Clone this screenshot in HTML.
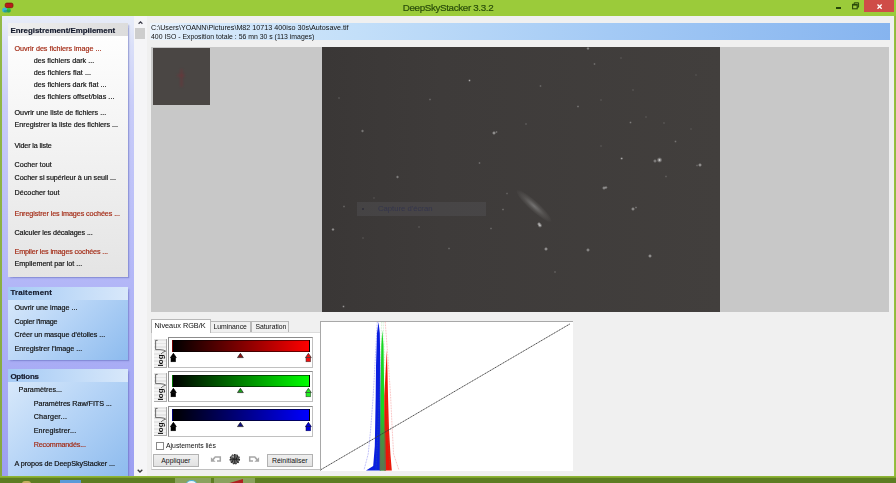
<!DOCTYPE html>
<html><head><meta charset="utf-8">
<style>
html,body{margin:0;padding:0;}
body{width:896px;height:483px;overflow:hidden;position:relative;background:#f0f0f0;font-family:"Liberation Sans",sans-serif;font-size:7.2px;color:#0e0e0e;}
span,.btn,#ttext{will-change:opacity;opacity:0.999}
div,span{position:absolute;box-sizing:border-box;white-space:nowrap;}
svg{position:absolute;overflow:visible;}
#title{left:0;top:0;width:896px;height:15.9px;background:#9bcb3a;}
#ttext{left:0;width:896px;top:1.8px;text-align:center;font-size:9.8px;letter-spacing:-0.35px;color:#2a4d0a;-webkit-text-stroke:0.2px #2a4d0a;}
#lb{left:0;top:16px;width:1.9px;height:461px;background:linear-gradient(180deg,#93ba48,#86a840);}
#rb{left:893.9px;top:16px;width:2.2px;height:461px;background:linear-gradient(90deg,#9cc63c,#8db243);}
#side{left:2px;top:16px;width:132px;height:461px;background:linear-gradient(180deg,#e8edf8 0px,#dadff8 30px,#c8ccf8 90px,#b7bbf8 230px,#9c9ff2 460px);}
.panel{left:6.2px;width:119.8px;}
.t{line-height:10px;height:10px;-webkit-text-stroke:0.18px currentColor;}
.r{color:#a32a14;}
.h{font-weight:bold;font-size:7.9px;color:#141a2c;}
.btn{background:linear-gradient(180deg,#efefef,#e2e2e2);border:0.7px solid #b2b2b2;text-align:center;font-size:6.9px;line-height:12px;color:#111;}
.sl{left:168px;width:145px;height:31px;background:#fff;border:0.8px solid #c0c0c0;border-top-color:#8c8c8c;border-left-color:#8c8c8c;}
.gr{left:171.7px;width:138px;height:12px;}
.log{left:154px;width:13px;height:29px;background:repeating-linear-gradient(180deg,#e6e6e6 0,#e6e6e6 0.7px,#f4f4f4 0.7px,#f4f4f4 1.4px);border-right:0.7px solid #aaa;border-bottom:0.7px solid #aaa;}
</style></head><body>
<div id="title"></div><div id="ttext">DeepSkyStacker 3.3.2</div>
<div id="lb"></div><div id="rb"></div>
<svg style="left:0;top:0" width="16" height="16" viewBox="0 0 16 16"><rect x="5.2" y="3.1" width="7.8" height="4.6" rx="1.6" fill="#b81c1c" stroke="#7a1208" stroke-width="0.7"/><ellipse cx="4.7" cy="10" rx="2.5" ry="2.5" fill="#34b8d8"/><ellipse cx="8.8" cy="10.3" rx="2" ry="2.2" fill="#2cc43c"/><ellipse cx="7" cy="11.3" rx="3.6" ry="1.3" fill="#1f8a6a" opacity="0.6"/></svg><div style="left:864.3px;top:0;width:29.4px;height:11.7px;background:#cf4c48;"></div>
<svg style="left:877.2px;top:3.7px" width="5.2" height="5.2" viewBox="0 0 5.2 5.2"><path d="M0.5 0.5 L4.7 4.7 M4.7 0.5 L0.5 4.7" stroke="#fff" stroke-width="1.3" fill="none"/></svg>
<div style="left:835.6px;top:6.7px;width:5.8px;height:1.9px;background:#27470a;"></div>
<svg style="left:852px;top:2.2px" width="7.2" height="7.4" viewBox="0 0 7.2 7.4"><path d="M2.2 2 V0.8 H6.6 V5.2 H5.2" stroke="#27470a" stroke-width="1" fill="none"/><rect x="0.6" y="2.4" width="4.6" height="4.4" stroke="#27470a" stroke-width="1.1" fill="none"/><path d="M0.6 2.9 H5.2" stroke="#27470a" stroke-width="1.4"/></svg>
<div id="side">
 <div class="panel" id="p1" style="top:7px;height:253.8px;background:linear-gradient(180deg,#ffffff 0,#f6f6f6 35%,#e4e4e4 100%);box-shadow:2.2px 2.2px 1.4px rgba(84,94,176,0.42);">
  <div style="left:0;top:0;width:119.8px;height:13.2px;background:linear-gradient(90deg,#f0f0f0,#dcdcdc);"></div>
 </div>
 <div class="panel" id="p2" style="top:270.8px;height:73px;background:linear-gradient(135deg,#dcebfb 0,#b4d3f6 50%,#8dbbee 100%);box-shadow:2.2px 2.2px 1.4px rgba(84,94,176,0.42);">
  <div style="left:0;top:0;width:119.8px;height:13.2px;background:linear-gradient(90deg,#a6cbf5,#d8e8fa);"></div>
 </div>
 <div class="panel" id="p3" style="top:353px;height:108px;background:linear-gradient(135deg,#dcebfb 0,#b4d3f6 50%,#8dbbee 100%);box-shadow:2.2px 2.2px 1.4px rgba(84,94,176,0.42);">
  <div style="left:0;top:0;width:119.8px;height:13.2px;background:linear-gradient(90deg,#a6cbf5,#d8e8fa);"></div>
 </div>
</div>
<div id="stext" style="left:0;top:0;width:134px;height:477px;overflow:hidden;">
<span class="t h" style="left:10.4px;top:26.4px;letter-spacing:0px">Enregistrement/Empilement</span>
<span class="t h" style="left:10.4px;top:288.4px;letter-spacing:0.17px">Traitement</span>
<span class="t h" style="left:10.4px;top:371.7px;letter-spacing:-0.22px">Options</span>
<span class="t r" style="left:14.5px;top:43.7px;letter-spacing:-0.021px">Ouvrir des fichiers image ...</span>
<span class="t " style="left:33.7px;top:55.8px;letter-spacing:0.009px">des fichiers dark ...</span>
<span class="t " style="left:33.7px;top:67.6px;letter-spacing:0.073px">des fichiers flat ...</span>
<span class="t " style="left:33.7px;top:79.7px;letter-spacing:0.04px">des fichiers dark flat ...</span>
<span class="t " style="left:33.7px;top:91.5px;letter-spacing:0.068px">des fichiers offset/bias ...</span>
<span class="t " style="left:14.5px;top:108.0px;letter-spacing:0.02px">Ouvrir une liste de fichiers ...</span>
<span class="t " style="left:14.5px;top:120.0px;letter-spacing:-0.01px">Enregistrer la liste des fichiers ...</span>
<span class="t " style="left:14.5px;top:140.8px;letter-spacing:-0.133px">Vider la liste</span>
<span class="t " style="left:14.5px;top:159.8px;letter-spacing:0.014px">Cocher tout</span>
<span class="t " style="left:14.5px;top:173.2px;letter-spacing:-0.048px">Cocher si supérieur à un seuil ...</span>
<span class="t " style="left:14.5px;top:187.9px;letter-spacing:0.029px">Décocher tout</span>
<span class="t r" style="left:14.5px;top:209.4px;letter-spacing:-0.084px">Enregistrer les images cochées ...</span>
<span class="t " style="left:14.5px;top:228.2px;letter-spacing:-0.081px">Calculer les décalages ...</span>
<span class="t r" style="left:14.5px;top:246.7px;letter-spacing:-0.137px">Empiler les images cochées ...</span>
<span class="t " style="left:14.5px;top:259.2px;letter-spacing:-0.011px">Empilement par lot ...</span>
<span class="t " style="left:14.5px;top:302.7px;letter-spacing:-0.001px">Ouvrir une image ...</span>
<span class="t " style="left:14.5px;top:316.6px;letter-spacing:-0.201px">Copier l'image</span>
<span class="t " style="left:14.5px;top:330.1px;letter-spacing:-0.035px">Créer un masque d'étoiles ...</span>
<span class="t " style="left:14.5px;top:343.5px;letter-spacing:0.001px">Enregistrer l'image ...</span>
<span class="t " style="left:18.6px;top:385.0px;letter-spacing:0.03px">Paramètres...</span>
<span class="t " style="left:33.7px;top:398.9px;letter-spacing:-0.045px">Paramètres Raw/FITS ...</span>
<span class="t " style="left:33.7px;top:411.9px;letter-spacing:0.182px">Charger...</span>
<span class="t " style="left:33.7px;top:425.8px;letter-spacing:0.135px">Enregistrer...</span>
<span class="t r" style="left:33.7px;top:439.7px;letter-spacing:-0.164px">Recommandés...</span>
<span class="t " style="left:14.5px;top:458.5px;letter-spacing:-0.048px">A propos de DeepSkyStacker ...</span>
</div>
<div id="sb" style="left:134px;top:16px;width:13px;height:461px;background:#f5f5f7;">
 <div style="left:1.2px;top:11.5px;width:9.8px;height:11px;background:#cdcdcd;"></div>
 <svg style="left:3.5px;top:4.9px" width="5" height="3.3" viewBox="0 0 6 4"><path d="M0.7 3.3 L3 1 L5.3 3.3" fill="none" stroke="#3a3a46" stroke-width="1.4"/></svg>
 <svg style="left:3.2px;top:453px" width="6" height="4" viewBox="0 0 6 4"><path d="M0.7 0.7 L3 3 L5.3 0.7" fill="none" stroke="#3a3a3a" stroke-width="1.3"/></svg>
</div>
<div id="info" style="left:150px;top:22.5px;width:739.5px;height:17.5px;background:linear-gradient(90deg,#ecf4fd 0,#d6e9fb 6%,#c3dff9 28%,#a4caf5 62%,#86b4ef 100%);"></div>
<span id="l1" style="left:151.3px;top:23.7px;font-size:7.8px;line-height:8.8px;color:#111;transform-origin:0 0;transform:scaleX(0.921)">C:\Users\YOANN\Pictures\M82 10713 400iso 30s\Autosave.tif</span>
<span id="l2" style="left:151.3px;top:32.5px;font-size:7.8px;line-height:8.8px;color:#111;transform-origin:0 0;transform:scaleX(0.883)">400 ISO - Exposition totale : 56 mn 30 s (113 images)</span>
<div id="gray" style="left:151.1px;top:46.5px;width:738.3px;height:265.2px;background:#c8c8c8;"></div>
<div id="thumb" style="left:153.1px;top:48.1px;width:57.1px;height:57.1px;background:#4a4644;"><div style="left:26.5px;top:21px;width:3.4px;height:18px;background:rgba(140,40,48,.26);filter:blur(1px)"></div><div style="left:23.5px;top:25.5px;width:8.5px;height:3.4px;background:rgba(140,40,48,.22);filter:blur(1px)"></div></div>
<div id="img" style="left:322px;top:47.4px;width:397.7px;height:264.3px;background:linear-gradient(90deg,#3a3736 0,#3e3b3a 30%,#423f3d 100%);overflow:hidden;">
<div style="left:35.2px;top:154.2px;width:128.8px;height:14px;background:rgba(96,96,104,0.28);"></div>
<span style="left:56px;top:156.3px;font-size:7.7px;line-height:10px;color:rgba(40,44,80,0.6);">Capture d'écran</span>
<div style="left:40px;top:160.5px;width:2px;height:2px;background:rgba(30,30,50,.6);border-radius:1px"></div>
<div style="left:188.5px;top:154px;width:46px;height:10px;border-radius:50%;background:radial-gradient(ellipse at center,rgba(150,150,150,.6) 0,rgba(110,108,106,.4) 40%,rgba(62,59,58,0) 75%);transform:rotate(42deg);"></div>
<div style="left:334.5px;top:109.7px;width:5.7px;height:5.7px;background:radial-gradient(circle,rgba(245,245,245,0.95) 0,rgba(210,210,210,0.52) 30%,rgba(130,128,126,0) 72%)"></div><div style="left:376.0px;top:115.2px;width:4.0px;height:4.0px;background:radial-gradient(circle,rgba(245,245,245,0.80) 0,rgba(210,210,210,0.44) 30%,rgba(130,128,126,0) 72%)"></div><div style="left:170.0px;top:83.3px;width:4.0px;height:4.0px;background:radial-gradient(circle,rgba(245,245,245,0.80) 0,rgba(210,210,210,0.44) 30%,rgba(130,128,126,0) 72%)"></div><div style="left:280.0px;top:138.4px;width:4.0px;height:4.0px;background:radial-gradient(circle,rgba(245,245,245,0.70) 0,rgba(210,210,210,0.39) 30%,rgba(130,128,126,0) 72%)"></div><div style="left:309.0px;top:159.6px;width:4.0px;height:4.0px;background:radial-gradient(circle,rgba(245,245,245,0.75) 0,rgba(210,210,210,0.41) 30%,rgba(130,128,126,0) 72%)"></div><div style="left:214.6px;top:174.4px;width:4.4px;height:4.4px;background:radial-gradient(circle,rgba(245,245,245,0.85) 0,rgba(210,210,210,0.47) 30%,rgba(130,128,126,0) 72%)"></div><div style="left:222.0px;top:199.3px;width:4.0px;height:4.0px;background:radial-gradient(circle,rgba(245,245,245,0.80) 0,rgba(210,210,210,0.44) 30%,rgba(130,128,126,0) 72%)"></div><div style="left:264.2px;top:200.8px;width:3.5px;height:3.5px;background:radial-gradient(circle,rgba(245,245,245,0.70) 0,rgba(210,210,210,0.39) 30%,rgba(130,128,126,0) 72%)"></div><div style="left:325.8px;top:206.4px;width:4.4px;height:4.4px;background:radial-gradient(circle,rgba(245,245,245,0.80) 0,rgba(210,210,210,0.44) 30%,rgba(130,128,126,0) 72%)"></div><div style="left:9.2px;top:180.4px;width:3.5px;height:3.5px;background:radial-gradient(circle,rgba(245,245,245,0.70) 0,rgba(210,210,210,0.39) 30%,rgba(130,128,126,0) 72%)"></div><div style="left:38.5px;top:82.1px;width:3.1px;height:3.1px;background:radial-gradient(circle,rgba(245,245,245,0.50) 0,rgba(210,210,210,0.28) 30%,rgba(130,128,126,0) 72%)"></div><div style="left:73.5px;top:128.1px;width:3.1px;height:3.1px;background:radial-gradient(circle,rgba(245,245,245,0.55) 0,rgba(210,210,210,0.30) 30%,rgba(130,128,126,0) 72%)"></div><div style="left:146.3px;top:31.7px;width:3.1px;height:3.1px;background:radial-gradient(circle,rgba(245,245,245,0.60) 0,rgba(210,210,210,0.33) 30%,rgba(130,128,126,0) 72%)"></div><div style="left:264.2px;top:-0.5px;width:3.5px;height:3.5px;background:radial-gradient(circle,rgba(245,245,245,0.60) 0,rgba(210,210,210,0.33) 30%,rgba(130,128,126,0) 72%)"></div><div style="left:254.7px;top:58.0px;width:2.6px;height:2.6px;background:radial-gradient(circle,rgba(245,245,245,0.50) 0,rgba(210,210,210,0.28) 30%,rgba(130,128,126,0) 72%)"></div><div style="left:156.4px;top:114.3px;width:2.6px;height:2.6px;background:radial-gradient(circle,rgba(245,245,245,0.45) 0,rgba(210,210,210,0.25) 30%,rgba(130,128,126,0) 72%)"></div><div style="left:298.4px;top:110.1px;width:2.6px;height:2.6px;background:radial-gradient(circle,rgba(245,245,245,0.50) 0,rgba(210,210,210,0.28) 30%,rgba(130,128,126,0) 72%)"></div><div style="left:231.7px;top:223.3px;width:2.6px;height:2.6px;background:radial-gradient(circle,rgba(245,245,245,0.50) 0,rgba(210,210,210,0.28) 30%,rgba(130,128,126,0) 72%)"></div><div style="left:106.7px;top:51.0px;width:2.6px;height:2.6px;background:radial-gradient(circle,rgba(245,245,245,0.40) 0,rgba(210,210,210,0.22) 30%,rgba(130,128,126,0) 72%)"></div><div style="left:15.5px;top:49.3px;width:2.6px;height:2.6px;background:radial-gradient(circle,rgba(245,245,245,0.40) 0,rgba(210,210,210,0.22) 30%,rgba(130,128,126,0) 72%)"></div><div style="left:202.7px;top:75.3px;width:2.6px;height:2.6px;background:radial-gradient(circle,rgba(245,245,245,0.45) 0,rgba(210,210,210,0.25) 30%,rgba(130,128,126,0) 72%)"></div><div style="left:271.2px;top:15.3px;width:2.6px;height:2.6px;background:radial-gradient(circle,rgba(245,245,245,0.45) 0,rgba(210,210,210,0.25) 30%,rgba(130,128,126,0) 72%)"></div><div style="left:217.3px;top:37.3px;width:2.6px;height:2.6px;background:radial-gradient(circle,rgba(245,245,245,0.40) 0,rgba(210,210,210,0.22) 30%,rgba(130,128,126,0) 72%)"></div><div style="left:20.2px;top:258.0px;width:2.6px;height:2.6px;background:radial-gradient(circle,rgba(245,245,245,0.50) 0,rgba(210,210,210,0.28) 30%,rgba(130,128,126,0) 72%)"></div><div style="left:95.5px;top:178.3px;width:2.6px;height:2.6px;background:radial-gradient(circle,rgba(245,245,245,0.40) 0,rgba(210,210,210,0.22) 30%,rgba(130,128,126,0) 72%)"></div><div style="left:125.7px;top:200.0px;width:2.6px;height:2.6px;background:radial-gradient(circle,rgba(245,245,245,0.40) 0,rgba(210,210,210,0.22) 30%,rgba(130,128,126,0) 72%)"></div><div style="left:215.8px;top:175.9px;width:4.4px;height:4.4px;background:radial-gradient(circle,rgba(245,245,245,0.85) 0,rgba(210,210,210,0.47) 30%,rgba(130,128,126,0) 72%)"></div><div style="left:312.7px;top:158.8px;width:2.6px;height:2.6px;background:radial-gradient(circle,rgba(245,245,245,0.50) 0,rgba(210,210,210,0.28) 30%,rgba(130,128,126,0) 72%)"></div><div style="left:331.4px;top:112.1px;width:3.5px;height:3.5px;background:radial-gradient(circle,rgba(245,245,245,0.60) 0,rgba(210,210,210,0.33) 30%,rgba(130,128,126,0) 72%)"></div><div style="left:173.4px;top:83.5px;width:2.2px;height:2.2px;background:radial-gradient(circle,rgba(245,245,245,0.50) 0,rgba(210,210,210,0.28) 30%,rgba(130,128,126,0) 72%)"></div><div style="left:307.3px;top:74.1px;width:2.6px;height:2.6px;background:radial-gradient(circle,rgba(245,245,245,0.35) 0,rgba(210,210,210,0.19) 30%,rgba(130,128,126,0) 72%)"></div><div style="left:340.7px;top:74.3px;width:2.6px;height:2.6px;background:radial-gradient(circle,rgba(245,245,245,0.35) 0,rgba(210,210,210,0.19) 30%,rgba(130,128,126,0) 72%)"></div><div style="left:352.2px;top:92.7px;width:2.6px;height:2.6px;background:radial-gradient(circle,rgba(245,245,245,0.30) 0,rgba(210,210,210,0.17) 30%,rgba(130,128,126,0) 72%)"></div><div style="left:298.7px;top:109.9px;width:2.6px;height:2.6px;background:radial-gradient(circle,rgba(245,245,245,0.40) 0,rgba(210,210,210,0.22) 30%,rgba(130,128,126,0) 72%)"></div><div style="left:282.2px;top:138.4px;width:3.5px;height:3.5px;background:radial-gradient(circle,rgba(245,245,245,0.60) 0,rgba(210,210,210,0.33) 30%,rgba(130,128,126,0) 72%)"></div><div style="left:342.9px;top:128.1px;width:2.2px;height:2.2px;background:radial-gradient(circle,rgba(245,245,245,0.30) 0,rgba(210,210,210,0.17) 30%,rgba(130,128,126,0) 72%)"></div><div style="left:373.9px;top:117.0px;width:2.2px;height:2.2px;background:radial-gradient(circle,rgba(245,245,245,0.35) 0,rgba(210,210,210,0.19) 30%,rgba(130,128,126,0) 72%)"></div><div style="left:297.9px;top:9.5px;width:2.2px;height:2.2px;background:radial-gradient(circle,rgba(245,245,245,0.30) 0,rgba(210,210,210,0.17) 30%,rgba(130,128,126,0) 72%)"></div><div style="left:309.9px;top:41.5px;width:2.2px;height:2.2px;background:radial-gradient(circle,rgba(245,245,245,0.35) 0,rgba(210,210,210,0.19) 30%,rgba(130,128,126,0) 72%)"></div><div style="left:322.9px;top:68.5px;width:2.2px;height:2.2px;background:radial-gradient(circle,rgba(245,245,245,0.30) 0,rgba(210,210,210,0.17) 30%,rgba(130,128,126,0) 72%)"></div><div style="left:277.9px;top:51.5px;width:2.2px;height:2.2px;background:radial-gradient(circle,rgba(245,245,245,0.30) 0,rgba(210,210,210,0.17) 30%,rgba(130,128,126,0) 72%)"></div><div style="left:277.9px;top:97.5px;width:2.2px;height:2.2px;background:radial-gradient(circle,rgba(245,245,245,0.30) 0,rgba(210,210,210,0.17) 30%,rgba(130,128,126,0) 72%)"></div><div style="left:373.1px;top:26.7px;width:1.8px;height:1.8px;background:radial-gradient(circle,rgba(245,245,245,0.25) 0,rgba(210,210,210,0.14) 30%,rgba(130,128,126,0) 72%)"></div><div style="left:368.1px;top:80.7px;width:1.8px;height:1.8px;background:radial-gradient(circle,rgba(245,245,245,0.25) 0,rgba(210,210,210,0.14) 30%,rgba(130,128,126,0) 72%)"></div><div style="left:20.6px;top:158.0px;width:2.2px;height:2.2px;background:radial-gradient(circle,rgba(245,245,245,0.40) 0,rgba(210,210,210,0.22) 30%,rgba(130,128,126,0) 72%)"></div><div style="left:50.9px;top:149.2px;width:2.2px;height:2.2px;background:radial-gradient(circle,rgba(245,245,245,0.30) 0,rgba(210,210,210,0.17) 30%,rgba(130,128,126,0) 72%)"></div><div style="left:167.7px;top:179.7px;width:2.6px;height:2.6px;background:radial-gradient(circle,rgba(245,245,245,0.40) 0,rgba(210,210,210,0.22) 30%,rgba(130,128,126,0) 72%)"></div><div style="left:179.7px;top:160.8px;width:2.6px;height:2.6px;background:radial-gradient(circle,rgba(245,245,245,0.45) 0,rgba(210,210,210,0.25) 30%,rgba(130,128,126,0) 72%)"></div><div style="left:183.9px;top:145.0px;width:2.2px;height:2.2px;background:radial-gradient(circle,rgba(245,245,245,0.35) 0,rgba(210,210,210,0.19) 30%,rgba(130,128,126,0) 72%)"></div><div style="left:39.9px;top:189.2px;width:2.2px;height:2.2px;background:radial-gradient(circle,rgba(245,245,245,0.35) 0,rgba(210,210,210,0.19) 30%,rgba(130,128,126,0) 72%)"></div></div>
<div style="left:150.5px;top:331.6px;width:170px;height:138px;background:#fff;border:0.7px solid #dcdcdc;border-bottom-color:#c0c0c0;border-right:none;"></div>
<div style="left:210.3px;top:321.2px;width:41px;height:10.8px;background:#f0f0f0;border:0.7px solid #b8b8b8;border-bottom:none;"></div>
<div style="left:250.8px;top:321.2px;width:38.5px;height:10.8px;background:#f0f0f0;border:0.7px solid #b8b8b8;border-bottom:none;"></div>
<div style="left:150.5px;top:319px;width:60.3px;height:13.5px;background:#fff;border:0.7px solid #b8b8b8;border-bottom:none;"></div>
<span style="left:154.5px;top:321px;line-height:10px;font-size:7.3px;">Niveaux RGB/K</span>
<span style="left:213.4px;top:322.1px;line-height:10px;font-size:6.85px;">Luminance</span>
<span style="left:255.4px;top:322.1px;line-height:10px;font-size:6.8px;">Saturation</span>
<div class="sl" style="top:337.0px"></div><div class="gr" style="top:340.4px;background:linear-gradient(90deg,#000,#ff0000);border:0.5px solid rgba(0,0,0,.55);"></div><div class="log" style="top:338.7px"></div><svg style="left:154px;top:338.7px" width="13" height="29" viewBox="0 0 13 29"><path d="M3.6 1.4 H1.6 V10.6 H6 Q10 10.8 11.6 12.2 Q8.5 13 7 15" stroke="#4a4a4a" stroke-width="0.8" fill="none"/><text transform="translate(8.9,27.4) rotate(-90)" font-family="Liberation Sans" font-weight="bold" font-size="8.1" fill="#111">log</text></svg><svg style="left:169.9px;top:353.4px" width="6.8" height="9.5" viewBox="0 0 6.8 9.5"><path d="M3.4 0.3 L6.3 4.6 L0.5 4.6 Z" fill="#000" stroke="#000" stroke-width="0.7"/><rect x="1" y="4.6" width="4.6" height="4.2" fill="#000" stroke="#000" stroke-width="0.5"/></svg><svg style="left:237.4px;top:353.4px" width="6.8" height="9.5" viewBox="0 0 6.8 9.5"><path d="M3.4 0.3 L6.3 4.6 L0.5 4.6 Z" fill="#8c1010" stroke="#222" stroke-width="0.7"/></svg><svg style="left:305.2px;top:353.4px" width="6.8" height="9.5" viewBox="0 0 6.8 9.5"><path d="M3.4 0.3 L6.3 4.6 L0.5 4.6 Z" fill="#f01010" stroke="#333" stroke-width="0.7"/><rect x="1" y="4.6" width="4.6" height="4.2" fill="#f01010" stroke="#333" stroke-width="0.5"/></svg><div class="sl" style="top:371.3px"></div><div class="gr" style="top:374.7px;background:linear-gradient(90deg,#000,#00ff00);border:0.5px solid rgba(0,0,0,.55);"></div><div class="log" style="top:373.0px"></div><svg style="left:154px;top:373.0px" width="13" height="29" viewBox="0 0 13 29"><path d="M3.6 1.4 H1.6 V10.6 H6 Q10 10.8 11.6 12.2 Q8.5 13 7 15" stroke="#4a4a4a" stroke-width="0.8" fill="none"/><text transform="translate(8.9,27.4) rotate(-90)" font-family="Liberation Sans" font-weight="bold" font-size="8.1" fill="#111">log</text></svg><svg style="left:169.9px;top:387.7px" width="6.8" height="9.5" viewBox="0 0 6.8 9.5"><path d="M3.4 0.3 L6.3 4.6 L0.5 4.6 Z" fill="#000" stroke="#000" stroke-width="0.7"/><rect x="1" y="4.6" width="4.6" height="4.2" fill="#000" stroke="#000" stroke-width="0.5"/></svg><svg style="left:237.4px;top:387.7px" width="6.8" height="9.5" viewBox="0 0 6.8 9.5"><path d="M3.4 0.3 L6.3 4.6 L0.5 4.6 Z" fill="#18a018" stroke="#222" stroke-width="0.7"/></svg><svg style="left:305.2px;top:387.7px" width="6.8" height="9.5" viewBox="0 0 6.8 9.5"><path d="M3.4 0.3 L6.3 4.6 L0.5 4.6 Z" fill="#20f020" stroke="#333" stroke-width="0.7"/><rect x="1" y="4.6" width="4.6" height="4.2" fill="#20f020" stroke="#333" stroke-width="0.5"/></svg><div class="sl" style="top:405.6px"></div><div class="gr" style="top:409.0px;background:linear-gradient(90deg,#000,#0000ff);border:0.5px solid rgba(0,0,0,.55);"></div><div class="log" style="top:407.3px"></div><svg style="left:154px;top:407.3px" width="13" height="29" viewBox="0 0 13 29"><path d="M3.6 1.4 H1.6 V10.6 H6 Q10 10.8 11.6 12.2 Q8.5 13 7 15" stroke="#4a4a4a" stroke-width="0.8" fill="none"/><text transform="translate(8.9,27.4) rotate(-90)" font-family="Liberation Sans" font-weight="bold" font-size="8.1" fill="#111">log</text></svg><svg style="left:169.9px;top:422.0px" width="6.8" height="9.5" viewBox="0 0 6.8 9.5"><path d="M3.4 0.3 L6.3 4.6 L0.5 4.6 Z" fill="#000" stroke="#000" stroke-width="0.7"/><rect x="1" y="4.6" width="4.6" height="4.2" fill="#000" stroke="#000" stroke-width="0.5"/></svg><svg style="left:237.4px;top:422.0px" width="6.8" height="9.5" viewBox="0 0 6.8 9.5"><path d="M3.4 0.3 L6.3 4.6 L0.5 4.6 Z" fill="#0c0c80" stroke="#222" stroke-width="0.7"/></svg><svg style="left:305.2px;top:422.0px" width="6.8" height="9.5" viewBox="0 0 6.8 9.5"><path d="M3.4 0.3 L6.3 4.6 L0.5 4.6 Z" fill="#0000d8" stroke="#000050" stroke-width="0.7"/><rect x="1" y="4.6" width="4.6" height="4.2" fill="#0000d8" stroke="#000050" stroke-width="0.5"/></svg>
<div style="left:155.6px;top:441.6px;width:8.2px;height:8.2px;background:#fff;border:0.8px solid #8a8a8a;"></div>
<span style="left:166px;top:440.8px;line-height:10px;font-size:6.85px;">Ajustements liés</span>
<div class="btn" style="left:153px;top:453.7px;width:45.6px;height:13.3px;">Appliquer</div>
<div class="btn" style="left:267px;top:453.7px;width:45.7px;height:13.3px;">Réinitialiser</div>
<svg style="left:205px;top:450px" width="60" height="20" viewBox="205 450 60 20"><g fill="none" stroke="#a6a6a6" stroke-width="1.5"><path d="M214.6 456.9 H220.3 V460.9 H217"/><path d="M255.4 456.9 H249.7 V460.9 H253"/><path d="M215 457.2 L212.4 460.2" stroke-width="1.7"/><path d="M255 457.2 L257.6 460.2" stroke-width="1.7"/></g><path d="M210.9 461.8 V457.3 L215.6 461.8 Z M259.1 461.8 V457.3 L254.4 461.8 Z" fill="#a6a6a6"/>
<circle cx="234.8" cy="459.2" r="4.7" fill="#6e6e6e" stroke="#2e2e2e" stroke-width="1.1" stroke-dasharray="1.5 1.1"/><path d="M234.8 454.6 V463.8 M230.2 459.2 H239.4 M232 456 Q234.8 459.2 232 462.4 M237.6 456 Q234.8 459.2 237.6 462.4" stroke="#1c1c1c" stroke-width="0.9" fill="none"/><circle cx="233" cy="456.8" r="1" fill="#c8c8c8" opacity="0.7"/></svg>
<div id="hist" style="left:320px;top:321px;width:252.5px;height:149.6px;background:#fff;border-top:0.8px solid #a8a8a8;border-left:0.8px solid #a8a8a8;"></div>
<svg style="left:320px;top:321px" width="253" height="150" viewBox="320 321 253 150">
<defs><linearGradient id="ol" x1="0" y1="0" x2="0" y2="1"><stop offset="0" stop-color="#5a7a4c" stop-opacity="0"/><stop offset="0.5" stop-color="#5a7a4c" stop-opacity="0.75"/><stop offset="1" stop-color="#5f6f55" stop-opacity="0.95"/></linearGradient></defs>
<path d="M378.5 322 L377 333 L376 366 L375.7 396 L374.8 446 L373.2 466 L366 470.4 L381 470.4 L380.6 396 L380.3 366 L379.8 333 Z" fill="#0a1ee0"/>
<path d="M382.3 330 L381.3 345 L380.5 396 L380.3 470.4 L385.8 470.4 L384.3 396 L383.5 345 Z" fill="#18d820"/>
<path d="M386.8 350 L385.6 372 L384.3 396 L384.3 470.4 L391.8 470.4 L390.5 455 L389 430 L388 396 L387.5 372 Z" fill="#ee1408"/>
<path d="M379.6 470.4 L379.8 410 L385 410 L386 470.4 Z" fill="url(#ol)"/>
<path d="M377.3 322 L373.2 396 L370.7 429 L368.2 454 L364 470" stroke="#5050f0" stroke-width="0.6" stroke-dasharray="0.8 0.8" fill="none" opacity="0.8"/>
<path d="M385.2 322 L389 372 L390.6 396 L392.2 429 L393.6 454 L398.9 470" stroke="#f06060" stroke-width="0.6" stroke-dasharray="0.8 0.8" fill="none" opacity="0.8"/>
<path d="M381.6 322 L379.5 396 L376 470 M383.2 322 L386 396 L390 470" stroke="#40c040" stroke-width="0.5" stroke-dasharray="0.8 0.8" fill="none" opacity="0.5"/>
<path d="M321 469.6 L569.8 324" stroke="#3a3a3a" stroke-width="0.9" stroke-dasharray="1.4 0.5" fill="none"/>
</svg>
<div id="wb" style="left:0;top:475.8px;width:896px;height:2.2px;background:linear-gradient(180deg,#93bb3a,#7a9e2a);"></div>
<div id="task" style="left:0;top:477.8px;width:896px;height:6px;background:#5d7d22;"></div>
<div style="left:60px;top:480px;width:20.5px;height:4px;background:#5a9ad8;"></div>
<div style="left:22px;top:481.3px;width:8.5px;height:3px;background:#c4b060;border-radius:3px 3px 0 0"></div>
<div style="left:175px;top:478.3px;width:35.5px;height:5px;background:#8aa25e;"></div>
<div style="left:214px;top:478.3px;width:41px;height:5px;background:#8aa25e;"></div>
<div style="left:185.5px;top:479.5px;width:11px;height:8px;background:#e8f4fa;border-radius:50%;border:1px solid #4ab0d8"></div>
<svg style="left:226px;top:478.5px" width="20" height="5" viewBox="0 0 20 5"><path d="M0 5 L17 0 L17 5 Z" fill="#b02020"/></svg>
</body></html>
